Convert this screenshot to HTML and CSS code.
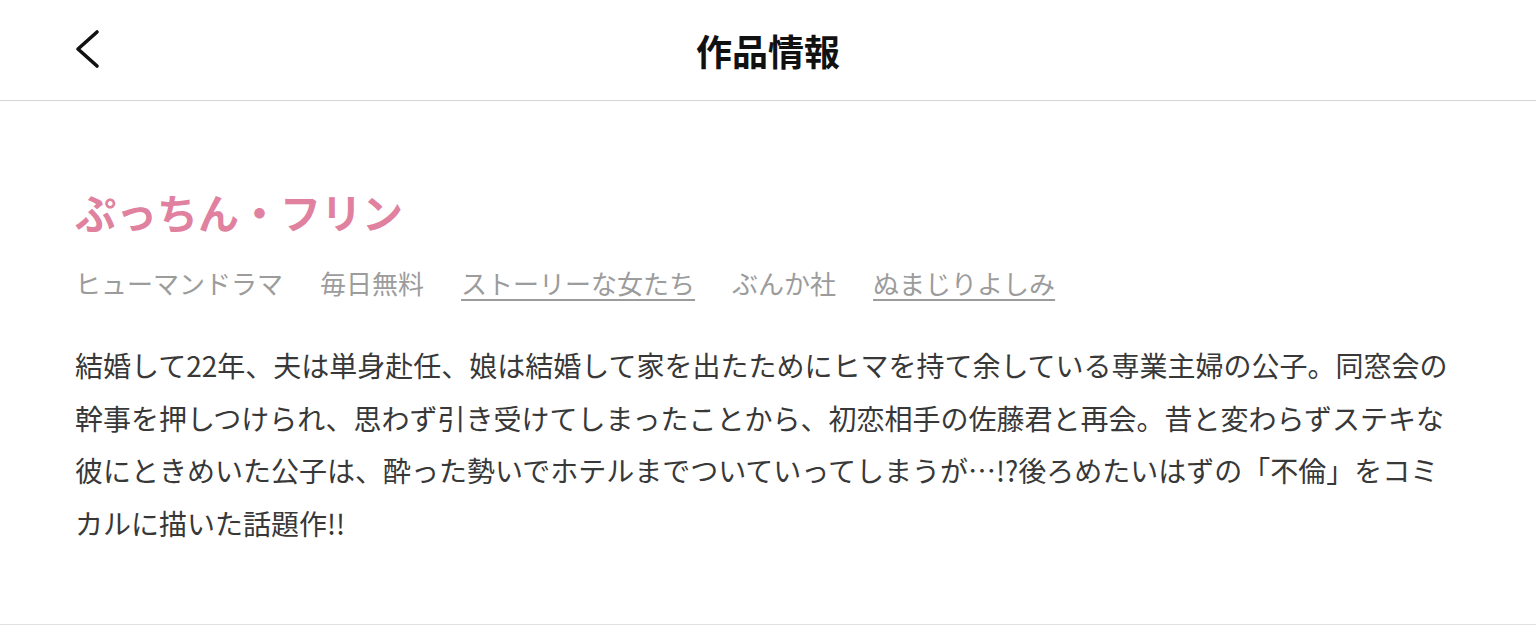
FILE: index.html
```html
<!DOCTYPE html>
<html lang="ja">
<head>
  <meta charset="utf-8">
  <title>作品情報</title>
  <link rel="stylesheet" href="styles.css">
</head>
<body>
  <header class="topbar">
    <a class="back" href="#" aria-label="戻る">
      <svg width="30" height="40" viewBox="0 0 30 40">
        <path d="M25 3 L6 20 L25 37" fill="none" stroke="#111" stroke-width="3.6" stroke-linecap="round" stroke-linejoin="round"/>
      </svg>
    </a>
    <h1>作品情報</h1>
  </header>

  <section class="work">
    <h2 class="work-title">ぷっちん・フリン</h2>
    <ul class="tags">
      <li>ヒューマンドラマ</li>
      <li>毎日無料</li>
      <li><a href="#">ストーリーな女たち</a></li>
      <li>ぶんか社</li>
      <li><a href="#">ぬまじりよしみ</a></li>
    </ul>
    <p class="summary">結婚して22年、夫は単身赴任、娘は結婚して家を出たためにヒマを持て余している専業主婦の公子。同窓会の幹事を押しつけられ、思わず引き受けてしまったことから、初恋相手の佐藤君と再会。昔と変わらずステキな彼にときめいた公子は、酔った勢いでホテルまでついていってしまうが…!?後ろめたいはずの「不倫」をコミカルに描いた話題作!!</p>
  </section>
</body>
</html>
```

FILE: styles.css
```css
body {
  margin: 0;
  background: #fff;
  font-family: "Noto Sans CJK JP", "Noto Sans", sans-serif;
  color: #333;
}

.topbar {
  position: relative;
  height: 100px;
  border-bottom: 1px solid #d4d4d4;
  display: flex;
  align-items: center;
  justify-content: center;
}

.back {
  position: absolute;
  left: 72px;
  top: 29px;
  display: block;
  line-height: 0;
}

.topbar h1 {
  margin: 0;
  font-size: 36px;
  font-weight: 700;
  color: #111;
}

.work {
  padding: 80px 75px 75px;
  border-bottom: 1px solid #e2e2e2;
}

.work-title {
  margin: 0;
  font-size: 41px;
  line-height: 60px;
  font-weight: 700;
  color: #e0819f;
}

.tags {
  list-style: none;
  margin: 22px 0 0;
  padding: 0;
  display: flex;
  gap: 37px;
  font-size: 26px;
  line-height: 40px;
  color: #9c9c9c;
}

.tags a {
  color: #9c9c9c;
  text-decoration: underline;
  text-underline-offset: 5px;
}

.summary {
  margin: 36px 0 0;
  font-size: 28px;
  line-height: 52.5px;
  color: #383838;
}
```
